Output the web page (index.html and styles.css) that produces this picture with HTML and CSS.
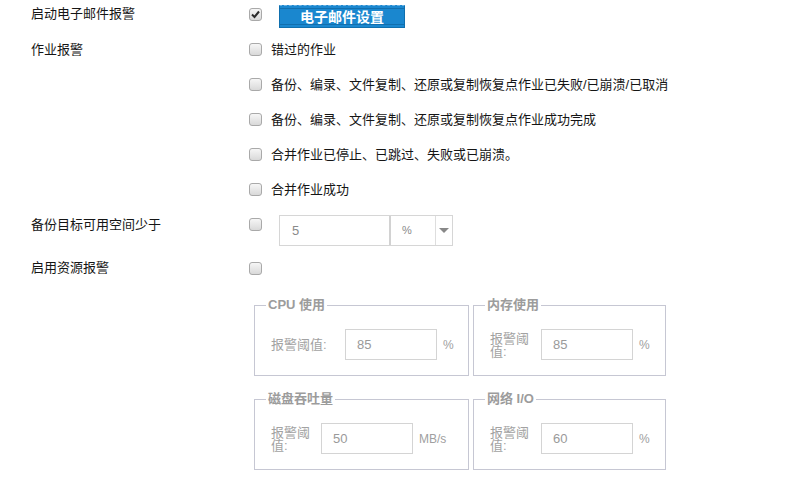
FILE: index.html
```html
<!DOCTYPE html>
<html lang="zh-CN">
<head>
<meta charset="utf-8">
<title>报警设置</title>
<link rel="stylesheet" href="styles.css">
</head>
<body>
<div class="form">
  <div class="row r1">
    <div class="lbl">启动电子邮件报警</div>
    <div class="ctl">
      <span class="cb checked"><svg width="11" height="11" viewBox="0 0 11 11"><path d="M2 5.5 L4.5 8 L9 2.5" fill="none" stroke="#2b2b2b" stroke-width="2"/></svg></span>
      <button class="btn">电子邮件设置</button>
    </div>
  </div>
  <div class="row r2">
    <div class="lbl">作业报警</div>
    <div class="ctl opts">
      <div class="opt"><span class="cb"></span><span class="otext">错过的作业</span></div>
      <div class="opt"><span class="cb"></span><span class="otext">备份、编录、文件复制、还原或复制恢复点作业已失败/已崩溃/已取消</span></div>
      <div class="opt"><span class="cb"></span><span class="otext">备份、编录、文件复制、还原或复制恢复点作业成功完成</span></div>
      <div class="opt"><span class="cb"></span><span class="otext">合并作业已停止、已跳过、失败或已崩溃。</span></div>
      <div class="opt"><span class="cb"></span><span class="otext">合并作业成功</span></div>
    </div>
  </div>
  <div class="row r3">
    <div class="lbl">备份目标可用空间少于</div>
    <div class="ctl top">
      <span class="cb"></span>
      <div class="igroup">
        <div class="ival">5</div>
        <div class="isel">%</div>
        <div class="iarrow"><span class="tri"></span></div>
      </div>
    </div>
  </div>
  <div class="row r4">
    <div class="lbl">启用资源报警</div>
    <div class="ctl"><span class="cb"></span></div>
  </div>
  <div class="row r5">
    <div class="lbl"></div>
    <div class="ctl">
      <div class="fsgrid">
        <fieldset class="fs">
          <legend>CPU 使用</legend>
          <div class="frow"><div class="tl wide">报警阈值:</div><div class="tin">85</div><div class="unit">%</div></div>
        </fieldset>
        <fieldset class="fs">
          <legend>内存使用</legend>
          <div class="frow"><div class="tl">报警阈值:</div><div class="tin">85</div><div class="unit">%</div></div>
        </fieldset>
        <fieldset class="fs">
          <legend>磁盘吞吐量</legend>
          <div class="frow"><div class="tl narrow">报警阈值:</div><div class="tin">50</div><div class="unit">MB/s</div></div>
        </fieldset>
        <fieldset class="fs">
          <legend>网络 I/O</legend>
          <div class="frow"><div class="tl">报警阈值:</div><div class="tin">60</div><div class="unit">%</div></div>
        </fieldset>
      </div>
    </div>
  </div>
</div>
</body>
</html>
```

FILE: styles.css
```css
* { box-sizing: border-box; }
html, body { margin: 0; padding: 0; background: #fff; }
body {
  font-family: "Liberation Sans", "Noto Sans CJK SC", sans-serif;
  font-size: 13px;
  color: #151515;
}
.form { padding-left: 31px; }
.row { display: flex; }
.lbl { width: 218px; flex: none; line-height: 35px; white-space: nowrap; }
.ctl { display: flex; align-items: center; }
.ctl.top { align-items: flex-start; }

.r1 { height: 29px; margin-bottom: 3px; }
.r1 .lbl { line-height: 27px; }
.r3 { min-height: 35px; }
.r4 { height: 44px; }
.r4 .lbl { line-height: 44px; }

.cb {
  width: 13px; height: 13px; flex: none;
  border: 1px solid #a9a9a9; border-radius: 3px;
  background: linear-gradient(#f6f6f6, #d9d9d9);
  display: inline-flex; align-items: center; justify-content: center;
}
.cb svg { display: block; }
.ctl.top .cb { margin-top: 11px; }

.btn {
  margin-left: 17px;
  width: 126px; height: 23px;
  margin-top: 4px;
  border: 1px solid #0f6fae;
  border-top: 1px dashed #6fb3e3;
  background: #1a87cf;
  box-shadow: inset 0 2px 0 #1a87cf, inset 0 3px 0 #116fae, inset 0 -2px 0 #1a87cf, inset 0 -3px 0 #116fae;
  color: #fff; font-weight: bold; font-size: 14px;
  font-family: "Liberation Sans", "Noto Sans CJK SC", sans-serif;
  line-height: 20px; padding: 0;
}

.opts { flex-direction: column; align-items: flex-start; }
.opt { height: 35px; display: flex; align-items: center; }
.otext { margin-left: 9px; line-height: 16px; white-space: nowrap; }

.igroup {
  margin-left: 17px; margin-top: 8px;
  display: flex; height: 31px;
  border: 1px solid #d6d6d6;
  color: #8a8a8a;
}
.ival { width: 109px; padding-left: 12px; line-height: 29px; }
.isel { width: 46px; border-left: 2px solid #d2d2d2; padding-left: 11px; line-height: 29px; font-size: 11px; }
.iarrow { width: 17px; border-left: 1px solid #dedede; display: flex; align-items: center; justify-content: center; }
.tri { width: 0; height: 0; border-left: 5px solid transparent; border-right: 5px solid transparent; border-top: 5px solid #888; }

.fsgrid {
  margin-left: 5px; margin-top: 7px;
  display: grid;
  grid-template-columns: 215px 193px;
  column-gap: 4px; row-gap: 15px;
}
.fs {
  margin: 0; min-width: 0;
  padding: 16px 11px 15px;
  border: 1px solid #c6c7d3;
}
.fs legend {
  padding: 0 2px;
  font-weight: bold; font-size: 13px; line-height: 16px;
  color: #9c9c9c;
}
.frow { display: flex; align-items: center; height: 31px; padding-left: 5px; color: #a2a2a2; }
.tl { width: 51px; flex: none; padding-right: 11px; line-height: 13px; }
.tl.wide { width: 74px; white-space: nowrap; }
.tl.narrow { width: 50px; }
.tin {
  width: 92px; height: 31px; flex: none;
  border: 1px solid #d4d4d4;
  padding-left: 11px; line-height: 29px;
  color: #9a9a9a;
}
.unit { margin-left: 6px; font-size: 12px; color: #a0a0a0; }
```
